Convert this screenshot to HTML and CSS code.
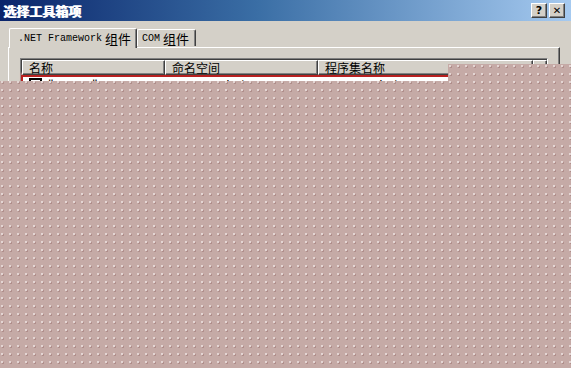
FILE: index.html
```html
<!DOCTYPE html>
<html lang="zh-CN">
<head>
  <meta charset="UTF-8" />
  <title>选择工具箱项</title>
  <link rel="stylesheet" href="styles.css">
</head>
<body>

  <div class="dialog">
    <!-- 标题栏 -->
    <div class="titlebar">
      <span class="title">选择工具箱项</span>
      <div class="caption-btns">
        <span class="cbtn">?</span>
        <span class="cbtn close">✕</span>
      </div>
    </div>

    <div class="content">
      <!-- 选项卡 -->
      <div class="tabs">
        <div class="tab active"><span class="mono">.NET Framework</span> 组件</div>
        <div class="tab"><span class="mono">COM</span> 组件</div>
      </div>

      <div class="panel">
        <div class="listview">
          <div class="lv-header">
            <div class="col c1">名称</div>
            <div class="col c2">命名空间</div>
            <div class="col c3">程序集名称</div>
            <div class="col filler"></div>
          </div>
          <div class="lv-row selected">
            <span class="check"></span>
            <span class="cell n1">"Button"</span>
            <span class="cell n2">System.Windows.Forms</span>
            <span class="cell n3">System.Windows.Forms (2.0.0.0)</span>
          </div>
        </div>
      </div>
    </div>

    <!-- 遮罩 -->
    <div class="mask"></div>
  </div>

</body>
</html>
```

FILE: styles.css
```css
/* Reset */
* {
  margin: 0;
  padding: 0;
  box-sizing: border-box;
}

body {
  font-family: "Noto Sans CJK SC", "DejaVu Sans", sans-serif;
  font-size: 12px;
  background-color: #d4d0c8;
}

.dialog {
  position: relative;
  width: 571px;
  height: 368px;
  overflow: hidden;
  background-color: #d4d0c8;
}

/* 标题栏 */
.titlebar {
  height: 21px;
  display: flex;
  align-items: center;
  justify-content: space-between;
  padding: 0 6px 0 3px;
  background: linear-gradient(to right, #0a246a 0%, #3a6ea5 45%, #a6caf0 100%);
}

.title {
  color: #fff;
  font-weight: 700;
  font-size: 13px;
  line-height: 15px;
  text-shadow: 1px 0 0 #fff;
}

.caption-btns {
  display: flex;
  gap: 2px;
}

.cbtn {
  width: 16px;
  height: 15px;
  display: flex;
  align-items: center;
  justify-content: center;
  background-color: #d4d0c8;
  border-top: 1px solid #fff;
  border-left: 1px solid #fff;
  border-right: 1px solid #404040;
  border-bottom: 1px solid #404040;
  box-shadow: inset -1px -1px 0 #808080;
  font-family: "DejaVu Sans", sans-serif;
  font-weight: bold;
  font-size: 11px;
  line-height: 1;
  color: #000;
}

.cbtn.close { font-size: 10px; }

/* 内容 */
.content {
  padding: 6px 11px 0 8px;
}

.tabs {
  display: flex;
  align-items: flex-end;
  padding-left: 1px;
  height: 20px;
  position: relative;
  z-index: 1;
}

.tab {
  height: 17px;
  padding: 0 6px 0 4px;
  display: flex;
  align-items: center;
  border-top: 1px solid #fff;
  border-left: 1px solid #fff;
  border-right: 1px solid #404040;
  box-shadow: inset -1px 0 0 #808080;
  border-radius: 2px 2px 0 0;
  margin-bottom: 1px;
  background-color: #d4d0c8;
  color: #000;
  white-space: nowrap;
  font-size: 13px;
}

.tab.active {
  height: 20px;
  margin-bottom: -1px;
  padding: 0 6px 0 8px;
  width: 128px;
}

.mono {
  font-family: "Liberation Mono", monospace;
  font-size: 10px;
  margin-right: 3px;
}

.panel {
  height: 330px;
  border-top: 1px solid #fff;
  border-left: 1px solid #fff;
  border-right: 1px solid #404040;
  box-shadow: inset -1px 0 0 #808080;
  padding: 10px 11px 0 11px;
}

/* 列表 */
.listview {
  height: 260px;
  background-color: #fff;
  border-top: 1px solid #808080;
  border-left: 1px solid #808080;
  border-right: 1px solid #fff;
  box-shadow: inset 1px 1px 0 #404040;
  padding: 1px 0 0 1px;
}

.lv-header {
  display: flex;
  height: 15px;
}

.col {
  height: 15px;
  line-height: 14px;
  padding-left: 6px;
  background-color: #d4d0c8;
  border-top: 1px solid #fff;
  border-left: 1px solid #fff;
  border-right: 1px solid #404040;
  border-bottom: 1px solid #404040;
  box-shadow: inset -1px -1px 0 #808080;
  color: #000;
  white-space: nowrap;
  overflow: hidden;
}

.c1 { width: 143px; }
.c2 { width: 153px; }
.c3 { width: 215px; }
.filler { flex: 1; }

.lv-row {
  display: flex;
  align-items: center;
  height: 16px;
  white-space: nowrap;
}

.lv-row.selected {
  border-top: 2px solid #b82020;
  border-left: 2px solid #b82020;
  margin-left: -1px;
  box-shadow: 0 -2px 2px #f0b0b0;
}

.check {
  width: 13px;
  height: 13px;
  margin: 0 6px 0 6px;
  border: 2px solid #000;
  background-color: #fff;
}

.cell { overflow: hidden; }
.n1 { width: 124px; }
.n2 { width: 153px; }

/* 遮罩 */
.mask {
  position: absolute;
  inset: 0;
  background-color: #c5aaa6;
  background-image:
    radial-gradient(circle at 2px 2px, #e4d6d4 0.7px, transparent 1px),
    radial-gradient(circle at 3px 3px, #98706e 0.5px, transparent 0.9px);
  background-size: 8px 8px;
  clip-path: polygon(0 81px, 448px 81px, 448px 64px, 100% 64px, 100% 100%, 0 100%);
  z-index: 5;
}
```
